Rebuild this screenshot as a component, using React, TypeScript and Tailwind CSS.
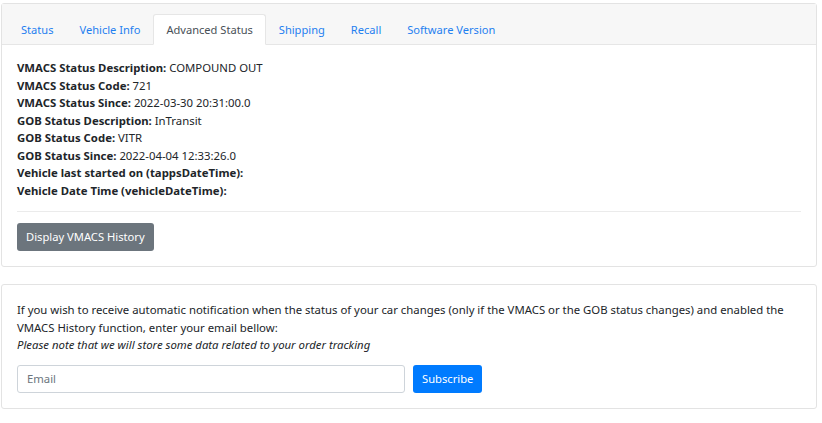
import { useState } from "react";

const tabs = ["Status", "Vehicle Info", "Advanced Status", "Shipping", "Recall", "Software Version"];

const rows: [string, string][] = [
  ["VMACS Status Description:", "COMPOUND OUT"],
  ["VMACS Status Code:", "721"],
  ["VMACS Status Since:", "2022-03-30 20:31:00.0"],
  ["GOB Status Description:", "InTransit"],
  ["GOB Status Code:", "VITR"],
  ["GOB Status Since:", "2022-04-04 12:33:26.0"],
  ["Vehicle last started on (tappsDateTime):", ""],
  ["Vehicle Date Time (vehicleDateTime):", ""],
];

export default function App() {
  const [active, setActive] = useState("Advanced Status");
  const [email, setEmail] = useState("");

  return (
    <div
      className="min-h-screen bg-white pl-px pr-[5px] pt-[3px] text-[11.35px] leading-[17.5px] text-[#212529]"
      style={{ fontFamily: '"Noto Sans", "Open Sans", sans-serif' }}
    >
      {/* Card with tabs */}
      <div className="rounded-[3px] border border-[#e3e3e3]">
        <div className="border-b border-[#e6e6e6] bg-[#f7f7f7] px-[6px] pt-[10px]">
          <ul className="-mb-px flex text-[11.1px]">
            {tabs.map((t) => {
              const on = t === active;
              return (
                <li key={t}>
                  <button
                    type="button"
                    onClick={() => setActive(t)}
                    className={[
                      "h-[31px] rounded-t-[3px] border px-[12px] leading-[28px]",
                      on
                        ? "border-[#e6e6e6] border-b-white bg-white text-[#495057]"
                        : "border-transparent text-[#1f7ff0]",
                    ].join(" ")}
                  >
                    {t}
                  </button>
                </li>
              );
            })}
          </ul>
        </div>

        <div className="px-[15px] pb-[15px] pt-[14px]">
          {rows.map(([k, v]) => (
            <div key={k}>
              <b className="font-bold">{k}</b> {v}
            </div>
          ))}
          <hr className="my-[11.5px] border-t border-[#ebebeb]" />
          <button
            type="button"
            className="h-[28px] rounded-[3px] bg-[#6c757d] px-[9px] text-[11.2px] text-white"
          >
            Display VMACS History
          </button>
        </div>
      </div>

      {/* Subscription card */}
      <div className="mt-[17px] rounded-[3px] border border-[#e3e3e3] px-[15px] pb-[15px] pt-[16px]">
        <p>
          If you wish to receive automatic notification when the status of your car changes (only if the VMACS or
          the GOB status changes) and enabled the VMACS History function, enter your email bellow:
          <br />
          <i>Please note that we will store some data related to your order tracking</i>
        </p>
        <div className="mt-[11px] flex gap-[8px]">
          <input
            type="email"
            value={email}
            onChange={(e) => setEmail(e.target.value)}
            placeholder="Email"
            className="h-[28px] w-[388px] rounded-[3px] border border-[#ced4da] px-[9px] text-[11.3px] text-[#495057] placeholder:text-[#6c757d] outline-none"
          />
          <button
            type="button"
            className="h-[28px] rounded-[3px] bg-[#007bff] px-[9px] text-[11.2px] text-white"
          >
            Subscribe
          </button>
        </div>
      </div>
    </div>
  );
}
